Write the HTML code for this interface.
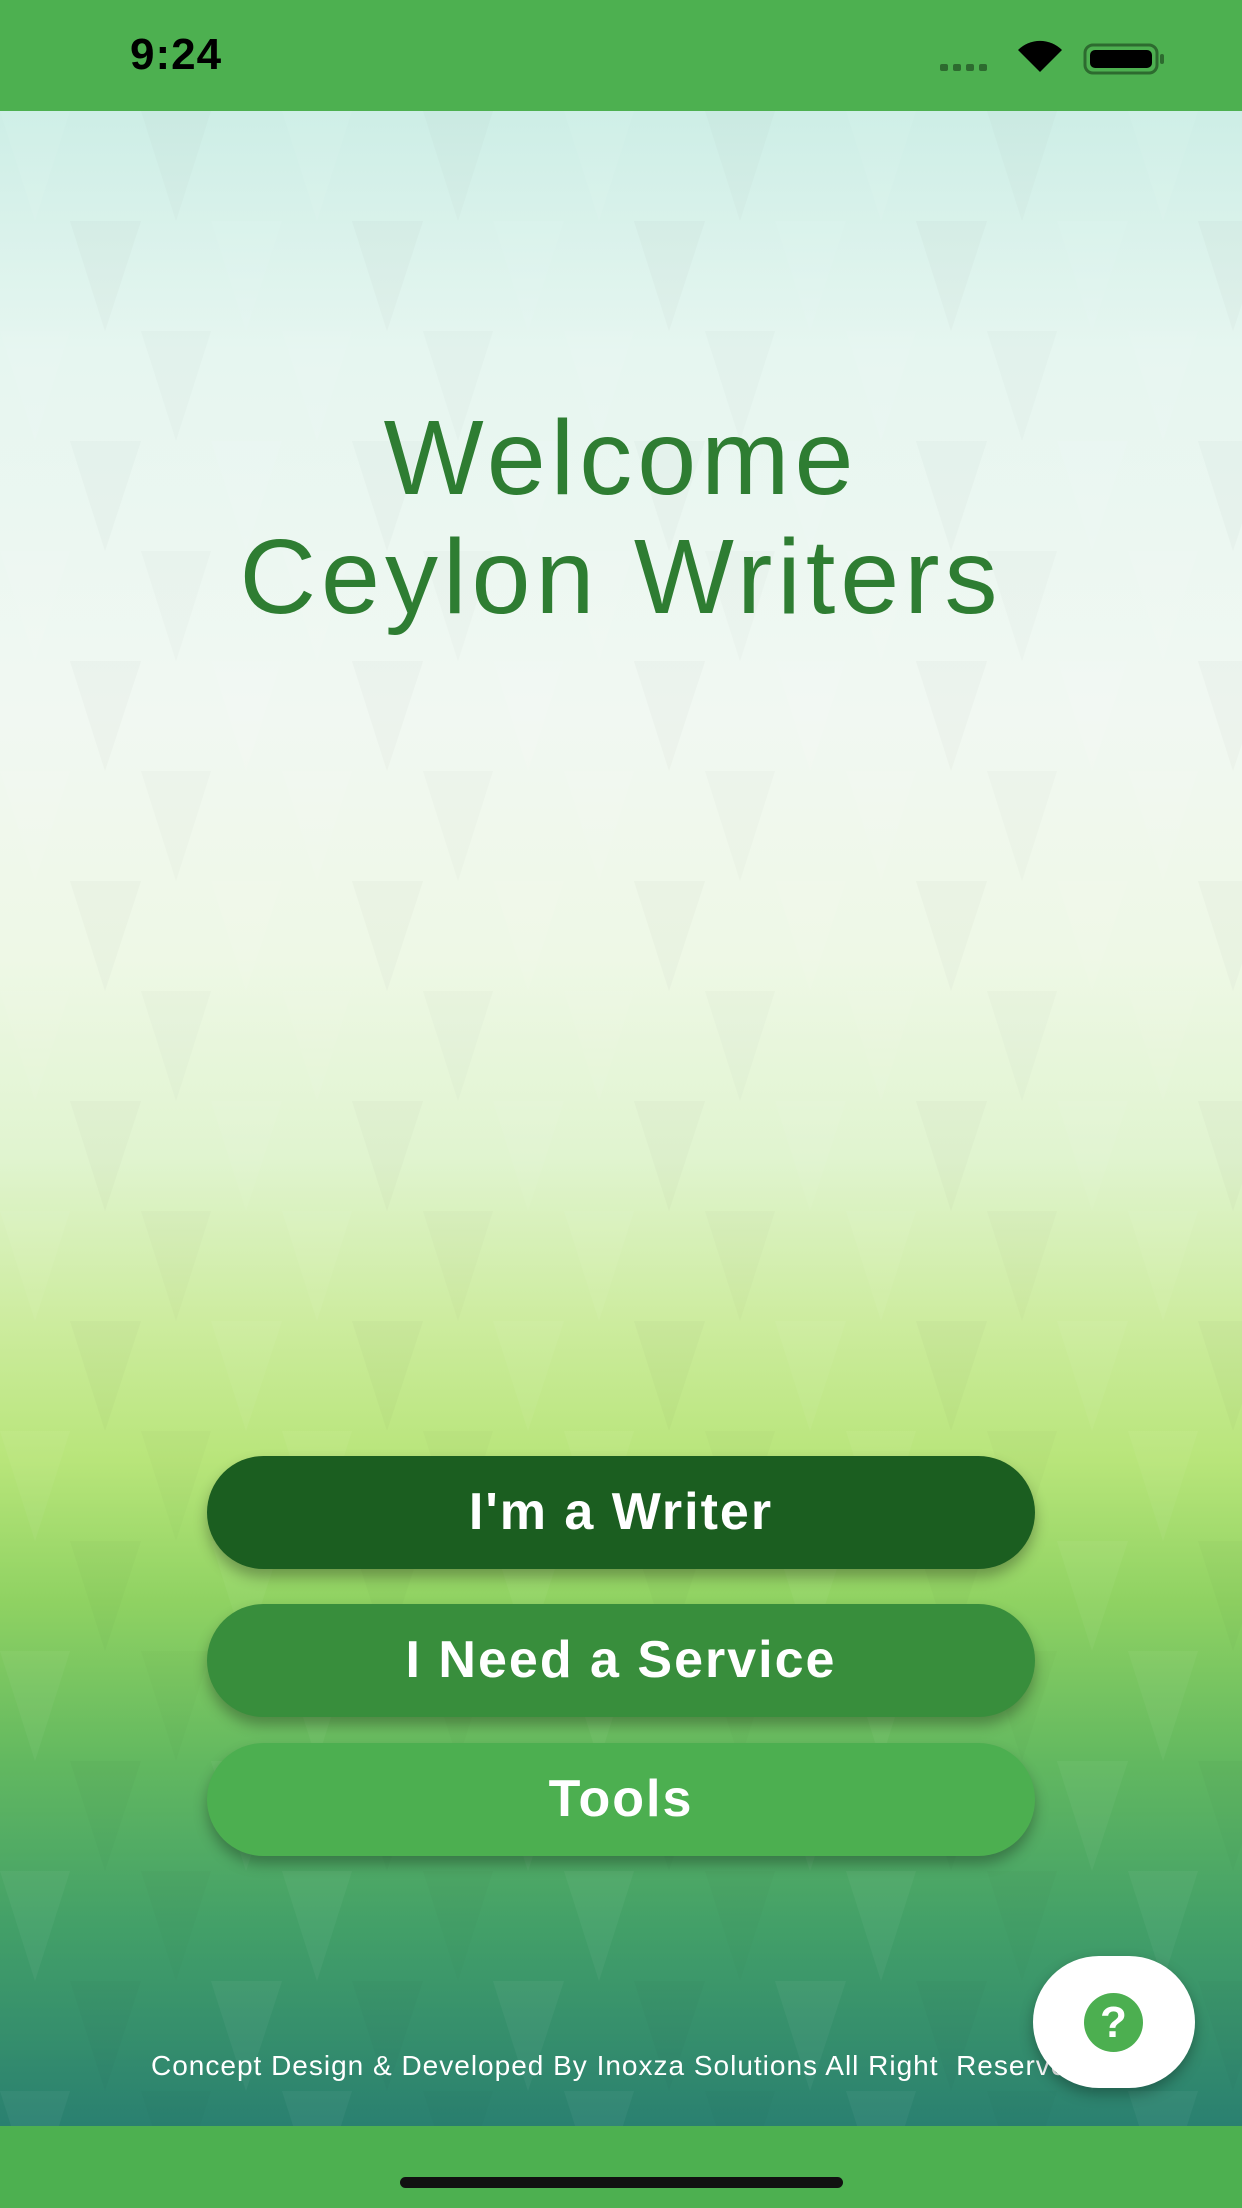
<!DOCTYPE html>
<html><head><meta charset="utf-8"><style>
*{margin:0;padding:0;box-sizing:border-box}
body{width:1242px;height:2208px;position:relative;overflow:hidden;font-family:"Liberation Sans",sans-serif}
.status{position:absolute;top:0;left:0;width:1242px;height:111px;background:#4db050}
.time{position:absolute;left:130px;top:30px;font-size:44px;font-weight:bold;color:#000;letter-spacing:1px}
.bg{position:absolute;top:111px;left:0;width:1242px;height:2015px;
background:linear-gradient(180deg,#cdeee6 0%,#e6f6f0 12%,#f1f8f2 30%,#eef8e6 42%,#e0f4cf 52%,#cdec9f 60%,#b8e57a 67%,#8fd262 74%,#62b860 82%,#43a068 90%,#2a8070 100%)}
.pat{position:absolute;top:111px;left:0}
.bottom{position:absolute;top:2126px;left:0;width:1242px;height:82px;background:#4db050}
.home{position:absolute;left:400px;top:2177px;width:443px;height:11px;border-radius:6px;background:#111}
.title{position:absolute;top:399px;left:0;width:1242px;text-align:center;color:#2e7d32;font-family:"Liberation Sans",sans-serif;font-size:106px;line-height:119px;letter-spacing:5px}
.btn{position:absolute;left:207px;width:828px;height:113px;border-radius:57px;color:#fff;font-size:52px;font-weight:bold;text-align:center;line-height:113px;letter-spacing:2px;box-shadow:0 8px 14px rgba(0,0,0,.3)}
.foot{position:absolute;left:151px;top:2050px;color:#fff;font-size:28px;letter-spacing:1px;white-space:nowrap}
.fab{position:absolute;left:1033px;top:1956px;width:162px;height:132px;border-radius:66px;background:#fff;box-shadow:0 6px 14px rgba(0,0,0,.3)}
.q{position:absolute;left:51px;top:37px;width:59px;height:59px;border-radius:50%;background:#4caf50;color:#fff;font-weight:bold;font-size:44px;text-align:center;line-height:59px}
</style></head><body>
<div class="status"><div class="time">9:24</div>
<svg style="position:absolute;left:940px;top:40px" width="230" height="36">
<g fill="#2d6b2f"><rect x="0" y="24" width="8" height="7" rx="2"/><rect x="13" y="24" width="8" height="7" rx="2"/><rect x="26" y="24" width="8" height="7" rx="2"/><rect x="39" y="24" width="8" height="7" rx="2"/></g>
<path d="M100 32 L78 10 A31 31 0 0 1 122 10 Z" fill="#000"/>
<rect x="145" y="5" width="72" height="28" rx="8" fill="none" stroke="#2d6b2f" stroke-width="3"/>
<rect x="150" y="10" width="62" height="18" rx="5" fill="#000"/><rect x="220" y="14" width="4" height="10" rx="2" fill="#2d6b2f"/>
</svg></div>
<div class="bg"></div>
<svg class="pat" width="1242" height="2015">
<defs><pattern id="p" width="282" height="220" patternUnits="userSpaceOnUse">
<polygon points="0,0 70,0 35,110" fill="#fff" opacity=".04"/>
<polygon points="141,0 211,0 176,110" fill="#000" opacity=".015"/>
<polygon points="70,110 141,110 105,220" fill="#000" opacity=".02"/>
<polygon points="211,110 282,110 246,220" fill="#fff" opacity=".04"/>
</pattern></defs>
<rect width="1242" height="2015" fill="url(#p)"/></svg>
<div class="title">Welcome<br>Ceylon Writers</div>
<div class="btn" style="top:1456px;background:#1b5e20">I'm a Writer</div>
<div class="btn" style="top:1604px;background:#388e3c">I Need a Service</div>
<div class="btn" style="top:1743px;background:#4caf50">Tools</div>
<div class="foot">Concept Design &amp; Developed By Inoxza Solutions All Right&nbsp; Reserved</div>
<div class="fab"><div class="q">?</div></div>
<div class="bottom"></div><div class="home"></div>
</body></html>
